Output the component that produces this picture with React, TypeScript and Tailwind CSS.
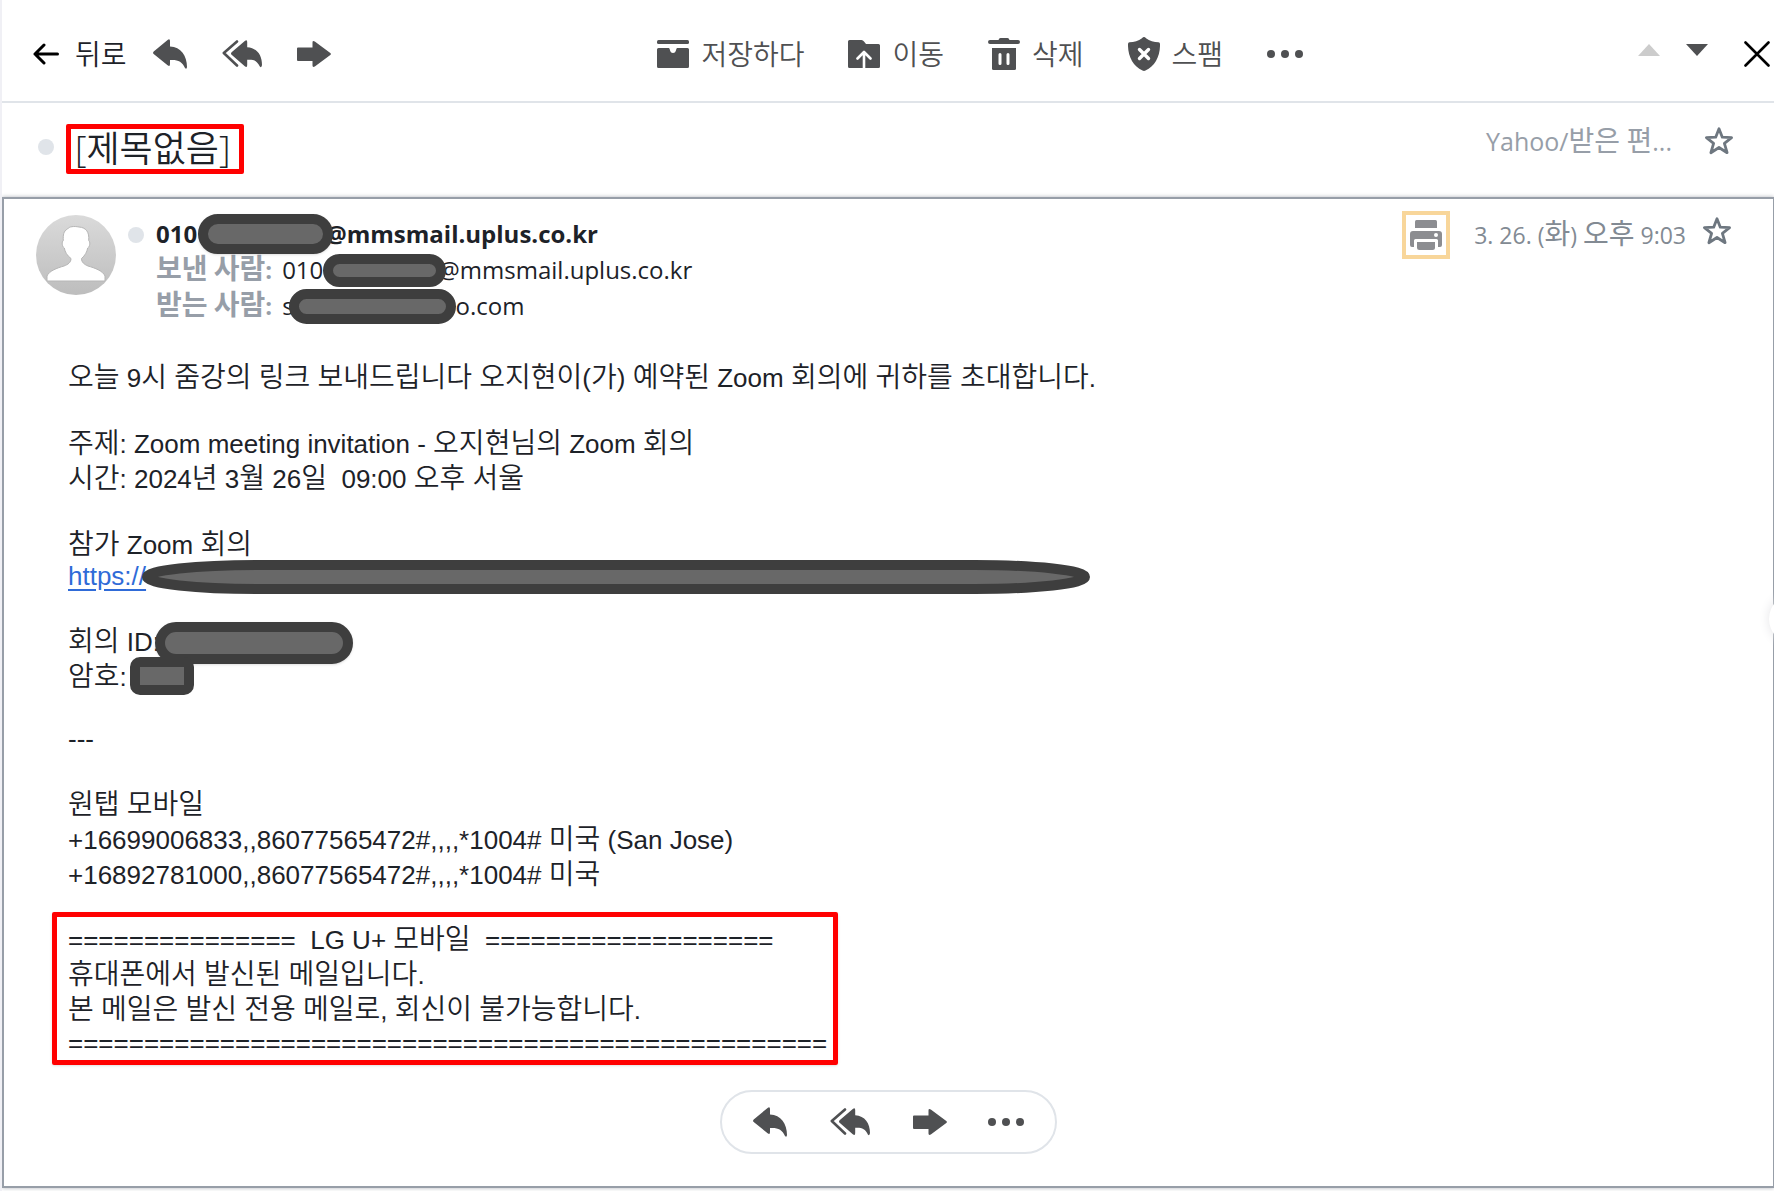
import type { ReactNode } from "react";
import clsx from "clsx";

type IconProps = { className?: string };

const HANGUL = /([\uAC00-\uD7A3]+)/;

// Hangul is set slightly larger than the Latin text around it.
function Mixed({ text }: { text: string }) {
  return (
    <>
      {text.split(HANGUL).map((part, i) =>
        HANGUL.test(part) ? (
          <span key={i} className="font-['Noto_Sans_CJK_KR',sans-serif] text-[28px] leading-none">
            {part}
          </span>
        ) : (
          part
        ),
      )}
    </>
  );
}

function ReplyIcon() {
  return (
    <svg width="34" height="30" viewBox="0 0 34 30" fill="currentColor" aria-hidden="true">
      <path d="M.7 12.4 14.6.9Q17-.6 17 2V7.5C28 8 34 17 34 28Q33.600 31 32 29C29 22.500 25 20.500 17 21V25Q17 28 14.600 26.200L.7 15Q-.6 13.700.7 12.400Z" />
    </svg>
  );
}

function ReplyAllIcon() {
  return (
    <svg width="40" height="28" viewBox="0 0 40 28" aria-hidden="true">
      <path d="M15 1.500 1.800 13 15 25.500" fill="none" stroke="currentColor" strokeWidth="2.600" strokeLinecap="round" strokeLinejoin="round" />
      <path
        d="M9.600 12.200 22.800.9Q25.200-.8 25.200 2V7.200C35 8 40 15 40 25Q39.600 28 38 26.800C35 20.500 32 19.500 25.200 19.800V25Q25.200 28 22.800 26.200L9.600 14.800Q8.400 13.500 9.600 12.200Z"
        fill="currentColor"
      />
    </svg>
  );
}

function ForwardIcon() {
  return (
    <svg width="34" height="26" viewBox="0 0 34 26" fill="currentColor" aria-hidden="true">
      <path d="M1 6.500H15.500V1.500Q15.500-.8 17.800.6L33.300 12Q34.500 13 33.300 14L17.800 25.500Q15.500 26.800 15.500 24.500V20H1Q0 20 0 19V7.500Q0 6.500 1 6.500Z" />
    </svg>
  );
}

function DotsIcon() {
  return (
    <svg width="36" height="8" viewBox="0 0 36 8" fill="currentColor" aria-hidden="true">
      <circle cx="4" cy="4" r="4" />
      <circle cx="18" cy="4" r="4" />
      <circle cx="32" cy="4" r="4" />
    </svg>
  );
}

function ArchiveIcon() {
  return (
    <svg width="32" height="28" viewBox="0 0 32 28" fill="currentColor" aria-hidden="true">
      <rect width="32" height="4" rx="1.500" />
      <path d="M1.500 8H11.800Q12.600 8 12.800 9.500 13.500 13 16 13T19.200 9.500Q19.400 8 20.200 8H30.500Q32 8 32 9.500V26.500Q32 28 30.500 28H1.500Q0 28 0 26.500V9.500Q0 8 1.500 8Z" />
    </svg>
  );
}

function MoveIcon() {
  return (
    <svg width="32" height="28" viewBox="0 0 32 28" aria-hidden="true">
      <path d="M1.500 0H13.500Q15 0 16 1.500L18 4H30.500Q32 4 32 5.500V26.500Q32 28 30.500 28H1.500Q0 28 0 26.500V1.500Q0 0 1.500 0Z" fill="currentColor" />
      <path d="M16 28V12M9.500 18.500 16 12 22.500 18.500" fill="none" stroke="#fff" strokeWidth="2.600" strokeLinecap="round" strokeLinejoin="round" />
    </svg>
  );
}

function TrashIcon() {
  return (
    <svg width="32" height="32" viewBox="0 0 32 32" aria-hidden="true">
      <path d="M12.500 0H19.500Q21 .2 21.500 2H30Q32 2 32 4T30 6H2Q0 6 0 4T2 2H10.500Q11 .2 12.500 0Z" fill="currentColor" />
      <path d="M4 10H28V30.500Q28 32 26.500 32H5.500Q4 32 4 30.500Z" fill="currentColor" />
      <path d="M12 16.500V25.500M20 16.500V25.500" stroke="#fff" strokeWidth="3" strokeLinecap="round" />
    </svg>
  );
}

function SpamIcon() {
  return (
    <svg width="32" height="34" viewBox="0 0 32 34" aria-hidden="true">
      <path d="M16 0Q17 0 18 1.200C21.500 4 26 5 30.500 5.300Q32 5.500 32 7C32.300 19 27 29 17.500 33.600Q16 34.300 14.500 33.600C5 29-.3 19 0 7Q0 5.500 1.500 5.300C6 5 10.500 4 14 1.200Q15 0 16 0Z" fill="currentColor" />
      <path d="M11.500 12.500 20.500 21.500M20.500 12.500 11.500 21.500" stroke="#fff" strokeWidth="3.400" strokeLinecap="round" />
    </svg>
  );
}

function StarIcon({ className }: IconProps) {
  return (
    <svg width="30" height="30" viewBox="0 0 30 30" className={className} aria-hidden="true">
      <path
        d="M15 2.800 18.300 11.200 27.600 11.600 20.400 17.300 23.100 26.700 15 21.500 6.900 26.700 9.600 17.300 2.400 11.600 11.700 11.200Z"
        fill="none"
        stroke="currentColor"
        strokeWidth="2.800"
        strokeLinejoin="round"
      />
    </svg>
  );
}

function PrinterIcon() {
  return (
    <svg width="32" height="30" viewBox="0 0 32 30" fill="currentColor" aria-hidden="true">
      <path d="M5 1.500Q5 0 6.500 0H25.500Q27 0 27 1.500V8H5Z" />
      <path d="M3 11H29Q32 11 32 14V25Q32 27 30 27H28V20.500Q28 19 26.500 19H5.500Q4 19 4 20.500V27H2Q0 27 0 25V14Q0 11 3 11Z" />
      <path d="M7 22H25V27.500Q25 30 22.500 30H9.500Q7 30 7 27.500Z" />
      <circle cx="26" cy="15" r="2" fill="#fff" />
    </svg>
  );
}

function Avatar() {
  return (
    <svg width="80" height="80" viewBox="0 0 80 80" className="shrink-0" role="img" aria-label="보낸 사람">
      <defs>
        <linearGradient id="avatar-bg" x1="0" y1="0" x2="0" y2="1">
          <stop offset="0" stopColor="#dadada" />
          <stop offset="1" stopColor="#bdbdbd" />
        </linearGradient>
      </defs>
      <circle cx="40" cy="40" r="40" fill="url(#avatar-bg)" />
      <path
        d="M11 66V61C13 56 21 53 28 51C32 49.500 35 47.500 35 43.500C31 40.500 29 37 28.300 33C26 31.500 25.500 27 27.300 25.500C27 20 27.500 16 31.500 14C33 11.500 38 11 43 12C50 12.500 53.500 17 52.700 25.500C54.500 27 54 31.500 51.700 33C51 37 49 40.500 45.500 43.500C45.500 47.500 48.500 49.500 52 51C59 53 67 56 69 61V66Z"
        fill="#fff"
        stroke="#b5b5b5"
        strokeWidth="1"
      />
    </svg>
  );
}

// Opaque marker that hides private parts of a line.
function Redaction({ className }: { className: string }) {
  return <span className={clsx("shrink-0 border-10 border-[#3e3e3e] bg-[#686868]", className)} />;
}

function LinkRedaction() {
  return (
    <svg width="948" height="34" viewBox="0 0 948 34" className="-ml-1 shrink-0" aria-hidden="true">
      <rect x="5" y="5" width="938" height="24" rx="110" ry="12" fill="#686868" stroke="#3e3e3e" strokeWidth="10" />
    </svg>
  );
}

function Line({ children }: { children: ReactNode }) {
  return <div className="flex h-[35px] items-center leading-[35px] whitespace-pre">{children}</div>;
}

function TextLine({ text }: { text: string }) {
  return (
    <p className="h-[35px] leading-[35px] whitespace-pre">
      <Mixed text={text} />
    </p>
  );
}

function Blank() {
  return <div className="h-[31px]" />;
}

const ACTIONS = [
  { label: "저장하다", icon: ArchiveIcon },
  { label: "이동", icon: MoveIcon },
  { label: "삭제", icon: TrashIcon },
  { label: "스팸", icon: SpamIcon },
];

function Toolbar() {
  return (
    <header className="flex h-[103px] items-center justify-between border-b-2 border-[#e0e4e9] pt-[7px] pr-1 pl-[31px] text-[#4f5052]">
      <div className="flex items-center">
        <button type="button" className="flex items-center gap-4 text-black">
          <svg width="26" height="22" viewBox="0 0 26 22" fill="none" stroke="currentColor" strokeWidth="3" strokeLinecap="round" strokeLinejoin="round" aria-hidden="true">
            <path d="M24.500 11H2M11 2 2 11 11 20" />
          </svg>
          <span className="text-[28px] leading-9 font-[350] text-[#1d2228]">뒤로</span>
        </button>
        <button type="button" aria-label="답장" className="ml-[26px]">
          <ReplyIcon />
        </button>
        <button type="button" aria-label="전체 답장" className="ml-[35px]">
          <ReplyAllIcon />
        </button>
        <button type="button" aria-label="전달" className="ml-[35px]">
          <ForwardIcon />
        </button>
      </div>

      <div className="mr-2 flex items-center gap-11">
        {ACTIONS.map(({ label, icon: Icon }) => (
          <button key={label} type="button" className="flex items-center gap-3">
            <Icon />
            <span className="text-[28px] leading-9 font-[350]">{label}</span>
          </button>
        ))}
        <button type="button" aria-label="더 보기">
          <DotsIcon />
        </button>
      </div>

      <div className="flex items-center">
        <button type="button" aria-label="이전 메일" className="mb-2 text-[#cccccc]">
          <svg width="22" height="12" viewBox="0 0 22 12" fill="currentColor" aria-hidden="true">
            <path d="M0 12 11 0 22 12Z" />
          </svg>
        </button>
        <button type="button" aria-label="다음 메일" className="mb-2 ml-[26px]">
          <svg width="22" height="12" viewBox="0 0 22 12" fill="currentColor" aria-hidden="true">
            <path d="M0 0H22L11 12Z" />
          </svg>
        </button>
        <button type="button" aria-label="닫기" className="ml-9 text-black">
          <svg width="26" height="26" viewBox="0 0 26 26" fill="none" stroke="currentColor" strokeWidth="2.600" strokeLinecap="round" aria-hidden="true">
            <path d="M1.500 1.500 24.500 24.500M24.500 1.500 1.500 24.500" />
          </svg>
        </button>
      </div>
    </header>
  );
}

function SubjectBar() {
  return (
    <div className="flex h-[94px] items-start pt-5 pr-10 pl-9">
      <span className="mt-4 size-4 rounded-full bg-[#e0e4e9]" />
      <h1 className="mt-px ml-3 flex h-[50px] w-[178px] items-center rounded-xs border-5 border-[#ff0000] pl-1 text-[36px] leading-10 font-[350] whitespace-nowrap text-[#1d2228]">
        [제목없음]
      </h1>
      <span className="ml-auto text-[25px] leading-9 text-[#979ea8]">
        <Mixed text="Yahoo/받은 편..." />
      </span>
      <button type="button" aria-label="별표" className="mt-[3px] ml-8 text-[#6e7780]">
        <StarIcon />
      </button>
    </div>
  );
}

function MessageHeader() {
  return (
    <div className="flex items-start pt-4 pr-[41px] pl-8">
      <Avatar />
      <span className="mt-3 ml-3 size-4 shrink-0 rounded-full bg-[#e0e4e9]" />
      <div className="mt-px ml-3 text-[24px] text-[#1d2228]">
        <div className="flex h-9 items-center font-bold">
          010
          <Redaction className="z-10 ml-px h-10 w-[135px] rounded-full shadow" />
          <span className="-ml-2">@mmsmail.uplus.co.kr</span>
        </div>
        <div className="flex h-9 items-center">
          <span className="mr-[10px] font-bold text-[#979ea8]">
            <Mixed text="보낸 사람:" />
          </span>
          010
          <Redaction className="z-10 h-[33px] w-[123px] rounded-full" />
          <span className="-ml-2">@mmsmail.uplus.co.kr</span>
        </div>
        <div className="flex h-9 items-center">
          <span className="mr-[10px] font-bold text-[#979ea8]">
            <Mixed text="받는 사람:" />
          </span>
          s
          <Redaction className="z-10 -ml-[5px] h-[35px] w-[167px] rounded-full" />
          o.com
        </div>
      </div>

      <div className="-mt-1 ml-auto flex items-center">
        <button type="button" aria-label="인쇄" className="flex size-12 items-center justify-center border-4 border-[#f8d69a] text-[#8c8d91]">
          <PrinterIcon />
        </button>
        <span className="ml-6 text-[23px] leading-9 text-[#828a93]">
          <Mixed text="3. 26. (화) 오후 9:03" />
        </span>
        <button type="button" aria-label="별표" className="mb-2 ml-4 text-[#6e7780]">
          <StarIcon />
        </button>
      </div>
    </div>
  );
}

function MessageBody() {
  return (
    <div className="mt-[37px] pl-16 font-['Liberation_Sans','Noto_Sans_CJK_KR',sans-serif] text-[26px] font-[350] text-[#1d2228]">
      <TextLine text="오늘 9시 줌강의 링크 보내드립니다 오지현이(가) 예약된 Zoom 회의에 귀하를 초대합니다." />
      <Blank />
      <TextLine text="주제: Zoom meeting invitation - 오지현님의 Zoom 회의" />
      <TextLine text="시간: 2024년 3월 26일  09:00 오후 서울" />
      <Blank />
      <TextLine text="참가 Zoom 회의" />
      <div className="-mt-0.5 mb-0.5 flex h-[31px] items-center leading-[31px]">
        <a href="#" className="text-[#2f6bd8] underline underline-offset-4">
          https://
        </a>
        <LinkRedaction />
      </div>
      <Blank />
      <Line>
        <span>
          <Mixed text="회의 ID:" />
        </span>
        <Redaction className="-ml-[5px] h-[42px] w-[198px] rounded-full shadow" />
      </Line>
      <Line>
        <span>
          <Mixed text="암호:" />
        </span>
        <Redaction className="mb-1 ml-[3px] h-[38px] w-16 rounded-[10px]" />
      </Line>
      <Blank />
      <p className="-mt-0.5 mb-0.5 leading-[31px]">---</p>
      <Blank />
      <TextLine text="원탭 모바일" />
      <TextLine text="+16699006833,,86077565472#,,,,*1004# 미국 (San Jose)" />
      <TextLine text="+16892781000,,86077565472#,,,,*1004# 미국" />
      <div className="mt-[19px] -ml-4 w-[786px] rounded-xs border-5 border-[#ff0000] pt-[6px] pb-px pl-[11px] shadow">
        <TextLine text="===============  LG U+ 모바일  ===================" />
        <TextLine text="휴대폰에서 발신된 메일입니다." />
        <TextLine text="본 메일은 발신 전용 메일로, 회신이 불가능합니다." />
        <p className="leading-[31px]">==================================================</p>
      </div>
    </div>
  );
}

function QuickActions() {
  return (
    <div className="mx-auto mt-[25px] flex h-16 w-fit items-center rounded-full border-2 border-[#e0e4e9] px-[31px] text-[#4f5052]">
      <button type="button" aria-label="답장">
        <ReplyIcon />
      </button>
      <button type="button" aria-label="전체 답장" className="ml-[43px]">
        <ReplyAllIcon />
      </button>
      <button type="button" aria-label="전달" className="ml-[43px]">
        <ForwardIcon />
      </button>
      <button type="button" aria-label="더 보기" className="ml-[41px]">
        <DotsIcon />
      </button>
    </div>
  );
}

export default function App() {
  return (
    <div className="relative flex min-h-screen flex-col overflow-hidden border-l-2 border-[#f0f0f5] bg-white pb-[3px] font-['Open_Sans','Noto_Sans_CJK_KR',sans-serif]">
      <Toolbar />
      <SubjectBar />
      <main className="flex-1 border-2 border-r border-[#979ea8] shadow-[0_0_4px_#b0b4bb]">
        <MessageHeader />
        <MessageBody />
        <QuickActions />
      </main>
      <button type="button" aria-label="사이드바 열기" className="absolute top-[594px] -right-[45px] size-[50px] rounded-full bg-white shadow-[0_0_12px_#e4e4e7]" />
    </div>
  );
}
